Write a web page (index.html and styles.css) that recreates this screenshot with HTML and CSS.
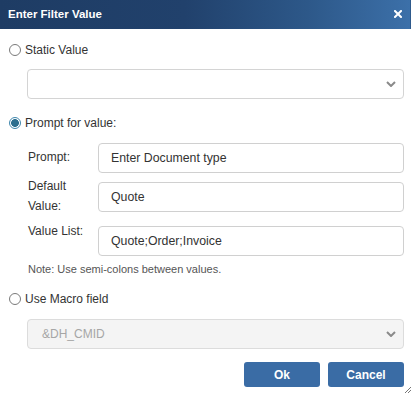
FILE: index.html
```html
<!DOCTYPE html>
<html>
<head>
<meta charset="utf-8">
<link rel="stylesheet" href="styles.css">
</head>
<body>
<div class="dialog">
  <div class="titlebar">
    <span class="title">Enter Filter Value</span>
    <svg class="close" width="8" height="8" viewBox="0 0 8 8"><path d="M1 1L7 7M7 1L1 7" stroke="#fff" stroke-width="2" stroke-linecap="square"/></svg>
  </div>
  <div class="content">
    <div class="radio-row r1"><span class="radio"></span><span>Static Value</span></div>
    <div class="select s1"><span class="select-text"></span>
      <svg class="chev" width="10" height="6" viewBox="0 0 10 6"><path d="M1 1L5 5L9 1" fill="none" stroke="#8a8a8a" stroke-width="2"/></svg>
    </div>
    <div class="radio-row r2"><span class="radio checked"></span><span>Prompt for value:</span></div>
    <div class="fields">
      <div class="field">
        <div class="flabel l-prompt">Prompt:</div>
        <div class="input">Enter Document type</div>
      </div>
      <div class="field f2">
        <div class="flabel l-default">Default<br>Value:</div>
        <div class="input">Quote</div>
      </div>
      <div class="field f3">
        <div class="flabel l-list">Value List:</div>
        <div class="input">Quote;Order;Invoice</div>
      </div>
    </div>
    <div class="note">Note: Use semi-colons between values.</div>
    <div class="radio-row r3"><span class="radio"></span><span>Use Macro field</span></div>
    <div class="select s2 disabled"><span class="select-text">&amp;DH_CMID</span>
      <svg class="chev" width="10" height="6" viewBox="0 0 10 6"><path d="M1 1L5 5L9 1" fill="none" stroke="#8a8a8a" stroke-width="2"/></svg>
    </div>
    <div class="actions">
      <button class="btn">Ok</button>
      <button class="btn">Cancel</button>
    </div>
  </div>
  <svg class="resize" width="8" height="8" viewBox="0 0 8 8"><path d="M1 7L7 1M4 7L7 4" stroke="#777" stroke-width="1"/></svg>
</div>
</body>
</html>
```

FILE: styles.css
```css
html, body {
  margin: 0;
  padding: 0;
  background: #fff;
}
body {
  font-family: "Liberation Sans", Arial, sans-serif;
  font-size: 12px;
  color: #333;
}
.dialog {
  position: relative;
  width: 414px;
  height: 396px;
  overflow: hidden;
  background: #fff;
}
.titlebar {
  box-sizing: border-box;
  width: 411px;
  height: 29px;
  display: flex;
  align-items: center;
  justify-content: space-between;
  padding: 0 8px 0 8px;
  background: linear-gradient(90deg, #1e3c64 0%, #21416c 45%, #2d5889 75%, #3c70a9 100%);
  border-right: 1px solid #2e5a8c;
}
.title {
  color: #fff;
  font-weight: bold;
  font-size: 11.5px;
  line-height: 14px;
  margin-top: -2px;
}
.close {
  display: block;
  margin-top: -2px;
}
.content {
  padding: 0 10px 0 9px;
  display: flex;
  flex-direction: column;
}
.radio-row {
  height: 20px;
  display: flex;
  align-items: center;
  gap: 4px;
  font-size: 12px;
}
.r1 { margin-top: 11px; }
.r2 { margin-top: 14px; }
.r3 { margin-top: 13px; }
.radio {
  box-sizing: border-box;
  width: 12px;
  height: 12px;
  border-radius: 50%;
  border: 1px solid #7a7a7a;
  background: #fff;
  flex: none;
}
.radio.checked {
  border: 1px solid #3f87ad;
  background: radial-gradient(circle, #2d6f8f 0, #2d6f8f 3.6px, #fff 4.2px);
}
.select {
  box-sizing: border-box;
  margin-left: 18px;
  height: 30px;
  border: 1px solid #d4d4d4;
  border-radius: 4px;
  display: flex;
  align-items: center;
  justify-content: space-between;
  padding: 0 7px 0 14px;
  background: #fff;
}
.s1 { margin-top: 9px; }
.s2 { margin-top: 10px; }
.select.disabled {
  background: #f4f4f4;
  border-color: #dcdcdc;
  color: #a6a6a6;
}
.chev { display: block; }
.fields {
  margin-top: 10px;
  margin-left: 19px;
  display: flex;
  flex-direction: column;
}
.field {
  display: flex;
  align-items: flex-start;
}
.f2 { margin-top: 9px; }
.f3 { margin-top: 10px; }
.flabel {
  width: 70px;
  flex: none;
  line-height: 20px;
}
.l-prompt { margin-top: 4px; }
.l-default { margin-top: -6px; }
.l-list { margin-top: -5px; }
.input {
  box-sizing: border-box;
  flex: 1;
  height: 30px;
  border: 1px solid #d0d0d0;
  border-radius: 4px;
  padding: 0 12px;
  display: flex;
  align-items: center;
  font-size: 12.3px;
}
.note {
  margin-top: 6px;
  margin-left: 19px;
  font-size: 11px;
  line-height: 14px;
  color: #555;
}
.actions {
  margin-top: 13px;
  display: flex;
  justify-content: flex-end;
  gap: 8px;
}
.btn {
  width: 76px;
  height: 25px;
  border: none;
  border-radius: 3px;
  background: #3a6ca5;
  color: #fff;
  font-family: "Liberation Sans", Arial, sans-serif;
  font-size: 12px;
  font-weight: bold;
  padding: 0;
}
.resize {
  position: absolute;
  right: 2px;
  bottom: 2px;
}
```
